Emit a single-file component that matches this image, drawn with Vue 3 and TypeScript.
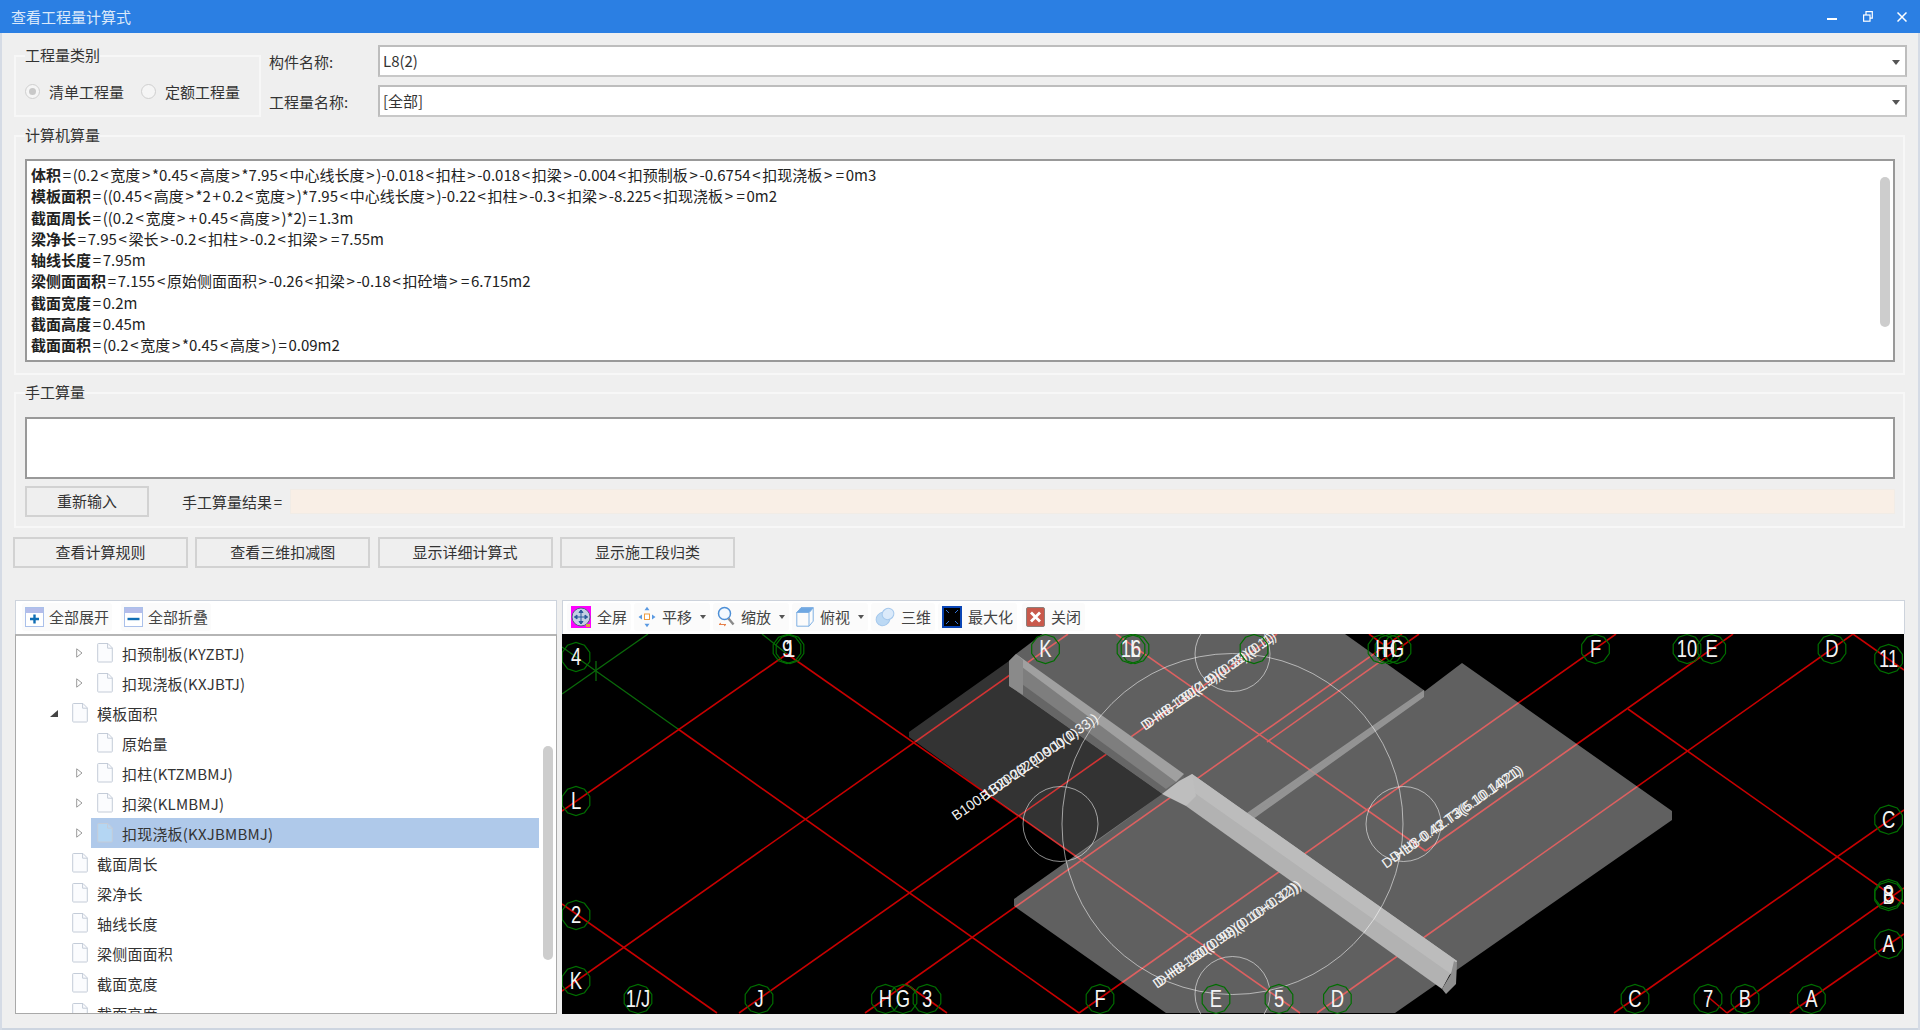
<template>
  <div class="window">
    <!-- 标题栏 -->
    <div class="titlebar">
      <span class="title">查看工程量计算式</span>
      <div class="win-btns">
        <svg class="win-min" width="10" height="10" viewBox="0 0 10 10"><rect x="0" y="6" width="10" height="2" fill="#fff" /></svg>
        <svg width="10" height="11" viewBox="0 0 10 11" fill="none" stroke="#fff" stroke-width="1.2"><rect x=".6" y="4" width="6.4" height="6.2" /><path d="M3 4V.7h6.3v6.5H7" /></svg>
        <svg width="10" height="10" viewBox="0 0 10 10" stroke="#fff" stroke-width="1.5"><path d="M.5.5l9 9M9.5.5l-9 9" /></svg>
      </div>
    </div>

    <div class="top-row">
      <fieldset class="group type-group">
        <legend>工程量类别</legend>
        <div class="radios">
          <label class="radio"><span class="dot checked"></span>清单工程量</label>
          <label class="radio"><span class="dot"></span>定额工程量</label>
        </div>
      </fieldset>
      <div class="combos">
        <span class="combo-label">构件名称:</span>
        <div class="combo">L8(2)<i class="caret"></i></div>
        <span class="combo-label">工程量名称:</span>
        <div class="combo">[全部]<i class="caret"></i></div>
      </div>
    </div>

    <!-- 计算机算量 -->
    <fieldset class="group calc-group">
      <legend>计算机算量</legend>
      <div class="formula-box">
        <div v-for="f in formulas" :key="f.name" class="formula">
          <b>{{ f.name }}</b><template v-for="(s, i) in splitExpr(f.expr)" :key="i"><span v-if="isSymbol(s)" class="sym">{{ s }}</span><template v-else>{{ s }}</template></template>
        </div>
        <div class="thumb formula-thumb"></div>
      </div>
    </fieldset>

    <!-- 手工算量 -->
    <fieldset class="group manual-group">
      <legend>手工算量</legend>
      <div class="manual-input"></div>
      <div class="manual-row">
        <button class="btn reset-btn">重新输入</button>
        <span class="result-label">手工算量结果<span class="sym">=</span></span>
        <div class="result-input"></div>
      </div>
    </fieldset>

    <div class="actions">
      <button v-for="a in actions" :key="a" class="btn action-btn">{{ a }}</button>
    </div>

    <div class="panels">
      <!-- 左侧树 -->
      <div class="tree-panel">
        <div class="toolbar">
          <span class="tool">
            <svg width="19" height="20" viewBox="0 0 19 20">
              <rect x=".5" y=".5" width="18" height="19" fill="#fff" stroke="#aac0ea" />
              <rect x="1" y="1" width="17" height="5" fill="#b4bdea" />
              <path d="M9.5 7.5v9M5 12h9" stroke="#0f6db4" stroke-width="2.4" />
            </svg>
            全部展开
          </span>
          <span class="tool">
            <svg width="19" height="20" viewBox="0 0 19 20">
              <rect x=".5" y=".5" width="18" height="19" fill="#fff" stroke="#aac0ea" />
              <rect x="1" y="1" width="17" height="5" fill="#b4bdea" />
              <path d="M3.5 12h12" stroke="#0f6db4" stroke-width="2.4" />
            </svg>
            全部折叠
          </span>
        </div>
        <div class="tree">
          <div v-for="n in nodes" :key="n.text" class="row" :class="'level' + n.level">
            <span class="expander">
              <svg v-if="n.kind === 'closed'" width="7" height="10" viewBox="0 0 7 10"><path d="M.7.8L6 5 .7 9.2z" fill="#fff" stroke="#9a9a9a" /></svg>
              <svg v-if="n.kind === 'open'" width="8" height="7" viewBox="0 0 8 7"><path d="M8 0v7H0z" fill="#444" /></svg>
            </span>
            <span class="node" :class="{ selected: n.selected }">
              <svg width="16" height="20" viewBox="0 0 16 20">
                <path d="M.7 1.2q0-.7.7-.7h9.6l4.3 4.4v13.4q0 .7-.7.7H1.4q-.7 0-.7-.7z" :fill="n.selected ? '#b4d6f3' : '#fbfcfe'" stroke="#c4ccd8" />
                <path d="M10.6.8v4.4h4.6" fill="none" stroke="#c4ccd8" />
              </svg>
              {{ n.text }}
            </span>
          </div>
          <div class="thumb tree-thumb"></div>
        </div>
      </div>

      <!-- 右侧三维视图 -->
      <div class="view-panel">
        <div class="toolbar view-toolbar">
          <span class="tool">
            <svg width="20" height="22" viewBox="0 0 20 22">
              <rect width="20" height="22" fill="#f0f" />
              <circle cx="10" cy="11" r="9" fill="#c3d0e4" stroke="#52647f" />
              <path d="M10 4v14M3.500 11h13M10 4l-2 2.500h4zM10 18l-2-2.500h4zM3.500 11l2.500-2v4zM16.500 11l-2.500-2v4z" fill="#2b5a9b" stroke="#2b5a9b" />
              <rect x="15" y="18" width="4" height="3" fill="#e2a23c" />
            </svg>
            全屏
          </span>
          <span class="tool">
            <svg width="18" height="22" viewBox="0 0 18 22" fill="#5b9ae2">
              <rect x="6.500" y="8" width="5" height="5.500" fill="#fff" stroke="#ef9b3c" />
              <path d="M9 .8l2.500 3.500h-5zM9 21.200l2.500-3.500h-5zM.5 11l3.500-2.500v5zM17.500 11L14 8.500v5z" />
            </svg>
            平移<i class="mini-caret"></i>
          </span>
          <span class="tool">
            <svg width="18" height="22" viewBox="0 0 18 22" fill="none">
              <circle cx="7.500" cy="7.500" r="6" stroke="#4d8fd6" stroke-width="1.500" fill="#f4f9fe" />
              <path d="M11.500 12.500l5 6" stroke="#8a8a8a" stroke-width="2.400" />
              <path d="M2 18.500h7M2 18.500l2-1.500M9 18.500l-2 1.500" stroke="#e7804a" />
            </svg>
            缩放<i class="mini-caret"></i>
          </span>
          <span class="tool">
            <svg width="18" height="20" viewBox="0 0 18 20" fill="none" stroke="#7fb0e3">
              <path d="M.8 5.500L5 .8h12.200v13.400L13 19.200H.8z" />
              <path d="M.8 5.500H13v13.700M13 5.500l4.200-4.700" />
              <path d="M.8 5.500L5 .8h12.200L13 5.500z" fill="#6ea7e2" />
            </svg>
            俯视<i class="mini-caret"></i>
          </span>
          <span class="tool">
            <svg width="20" height="20" viewBox="0 0 20 20">
              <ellipse cx="8" cy="12" rx="7" ry="6.500" fill="#bcd9f4" stroke="#a5c8ec" transform="rotate(-30 8 12)" />
              <ellipse cx="13" cy="7" rx="6" ry="5.500" fill="#dbeafa" stroke="#a5c8ec" transform="rotate(-30 13 7)" />
            </svg>
            三维
          </span>
          <span class="tool">
            <svg width="20" height="22" viewBox="0 0 20 22">
              <rect width="20" height="22" fill="#0a45b5" />
              <rect x="2" y="2" width="16" height="18" fill="#000" />
              <path d="M4 4l3 3M16 4l-3 3M4 18l3-3M16 18l-3-3" stroke="#3373d6" />
            </svg>
            最大化
          </span>
          <span class="tool tool-close">
            <svg width="19" height="20" viewBox="0 0 19 20">
              <rect x=".5" y=".5" width="18" height="19" rx="1.500" fill="#c9594b" stroke="#8d7f7b" />
              <path d="M5 5.500l9 9M14 5.500l-9 9" stroke="#fff" stroke-width="2.800" />
            </svg>
            关闭
          </span>
        </div>
        <svg class="canvas" width="1342" height="380" viewBox="563 635 1342 380">
          <rect x="563" y="635" width="1342" height="380" fill="#000" />
          <path v-for="(d, i) in greenLines" :key="'g' + i" :d="d" stroke="#0a6a0a" stroke-width="1.300" fill="none" />
          <path v-for="(d, i) in redLines" :key="'r' + i" :d="d" stroke="#c80000" stroke-width="1.600" fill="none" />

          <!-- 板 -->
          <polygon points="910,733 1010,662 1010,687 1163,795 1076,858 910,738" fill="#fff" opacity=".2" />
          <polygon points="1017,660 1017,655 1046,633 1346,635 1426,692 1249,818 1190,795" fill="#fff" opacity=".375" />
          <polygon points="1015,900 1163,795 1249,818 1426,692 1463,664 1673,812 1673,821 1396,1014 1167,1014 1015,907" fill="#fff" opacity=".375" />
          <polygon points="1425,691 1425,698 1250,823 1245,816" fill="#a0a0a0" opacity=".8" />

          <!-- 梁 -->
          <polygon points="1010,662 1017,655 1185,777 1187,807 1163,795 1010,687" fill="#666" />
          <polygon points="1023,665 1177,783 1167,790 1016,680" fill="#7e7e7e" />
          <polygon points="1017,655 1185,775 1177,783 1023,668" fill="#a0a0a0" />
          <polygon points="1010,662 1017,655 1024,661 1024,696 1010,687" fill="#8a8a8a" />
          <polygon points="1193,775 1458,962 1443,990 1187,807" fill="#b2b2b2" />
          <polygon points="1193,775 1458,962 1452,975 1190,790" fill="#bcbcbc" />
          <polygon points="1163,795 1180,782 1193,775 1197,797 1187,807" fill="#bebebe" />
          <polygon points="1455,962 1458,964 1457,985 1447,995 1443,990 1452,975" fill="#8f8f8f" />

          <circle cx="1233.500" cy="825" r="170.500" class="ring" />
          <circle cx="1061.500" cy="825" r="37.500" class="ring" />
          <circle cx="1404.500" cy="825" r="37.500" class="ring" />
          <circle cx="1233.500" cy="655" r="37.500" class="ring" />
          <circle cx="1233.500" cy="995" r="37.500" class="ring" />

          <text v-for="(t, i) in notes" :key="'n' + i" class="note" :transform="`translate(${t.x} ${t.y}) rotate(-35)`">{{ t.text }}</text>

          <polygon v-for="(t, i) in rings" :key="'o' + i" :points="decagon(t[0], t[1])" fill="none" stroke="#006e00" stroke-width="1.200" />
          <text v-for="(t, i) in tags" :key="'t' + i" class="tag" :transform="`translate(${t.x} ${t.y + 8}) scale(.8 1)`">{{ t.text }}</text>
        </svg>
      </div>
    </div>
  </div>
</template>

<script setup lang="ts">
interface TreeNode {
  text: string
  level: number
  kind: 'closed' | 'open' | 'leaf'
  selected?: boolean
}

const formulas = [
  { name: '体积', expr: '=(0.2<宽度>*0.45<高度>*7.95<中心线长度>)-0.018<扣柱>-0.018<扣梁>-0.004<扣预制板>-0.6754<扣现浇板>=0m3' },
  { name: '模板面积', expr: '=((0.45<高度>*2+0.2<宽度>)*7.95<中心线长度>)-0.22<扣柱>-0.3<扣梁>-8.225<扣现浇板>=0m2' },
  { name: '截面周长', expr: '=((0.2<宽度>+0.45<高度>)*2)=1.3m' },
  { name: '梁净长', expr: '=7.95<梁长>-0.2<扣柱>-0.2<扣梁>=7.55m' },
  { name: '轴线长度', expr: '=7.95m' },
  { name: '梁侧面面积', expr: '=7.155<原始侧面面积>-0.26<扣梁>-0.18<扣砼墙>=6.715m2' },
  { name: '截面宽度', expr: '=0.2m' },
  { name: '截面高度', expr: '=0.45m' },
  { name: '截面面积', expr: '=(0.2<宽度>*0.45<高度>)=0.09m2' }
]

// 符号两侧留的空比 CJK 字体默认的宽，单独包一层
const splitExpr = (expr: string) => expr.split(/([<>=+])/).filter(Boolean)
const isSymbol = (s: string) => /^[<>=+]$/.test(s)

const actions = ['查看计算规则', '查看三维扣减图', '显示详细计算式', '显示施工段归类']

const nodes: TreeNode[] = [
  { text: '扣预制板(KYZBTJ)', level: 2, kind: 'closed' },
  { text: '扣现浇板(KXJBTJ)', level: 2, kind: 'closed' },
  { text: '模板面积', level: 1, kind: 'open' },
  { text: '原始量', level: 2, kind: 'leaf' },
  { text: '扣柱(KTZMBMJ)', level: 2, kind: 'closed' },
  { text: '扣梁(KLMBMJ)', level: 2, kind: 'closed' },
  { text: '扣现浇板(KXJBMBMJ)', level: 2, kind: 'closed', selected: true },
  { text: '截面周长', level: 1, kind: 'leaf' },
  { text: '梁净长', level: 1, kind: 'leaf' },
  { text: '轴线长度', level: 1, kind: 'leaf' },
  { text: '梁侧面面积', level: 1, kind: 'leaf' },
  { text: '截面宽度', level: 1, kind: 'leaf' },
  { text: '截面高度', level: 1, kind: 'leaf' }
]

// 轴网线，坐标直接用整张图的像素
const redLines = [
  'M563 812L788 655',
  'M563 992L1069 635',
  'M740 1014L1278 635',
  'M866 1014L1403 635',
  'M1080 1014L1617 635',
  'M1426.500 852L1578 745L1734 635',
  'M1318 1014L1854 635',
  'M1615 1014L1905 811',
  'M1728 1014L1905 889',
  'M1791 1014L1905 935',
  'M788 655L1301 1014',
  'M679 730L1080 1014',
  'M563 905L718 1014',
  'M1117 635L1426.500 852',
  'M1268 743L1420 635',
  'M1370 635L1392 651',
  'M1854 635L1905 671',
  'M1629 710L1905 905',
  'M907 985L948 1014',
  'M1708 997L1728 1014'
]

const greenLines = [
  'M563 648L679 730',
  'M563 695L649 635',
  'M597 662V682',
  'M763 635L788 655'
]

const notes = [
  { x: 957, y: 822, text: 'B100-1B200(2.900.1)(0.33))' },
  { x: 985, y: 803, text: 'B100-282(1.900.1)' },
  { x: 1146, y: 732, text: 'D-H8-130(2.9)(0.33)(0.11)' },
  { x: 1149, y: 730, text: 'D-H8-180(1.9)(0.33)(0.1)' },
  { x: 1158, y: 990, text: 'D-H8-180(0.90)(0.10+0.32))' },
  { x: 1161, y: 988, text: 'D-H8-130(0.98)(0.10+0.12))' },
  { x: 1387, y: 870, text: 'D-H10-0.43.T3(6.10.14)21)' },
  { x: 1395, y: 864, text: 'D-H8-0.42.T3(5.10.1421)' }
]

const tags = [
  { x: 577, y: 658, text: '4' },
  { x: 788, y: 650, text: '9' },
  { x: 791, y: 650, text: '1' },
  { x: 1046.500, y: 650, text: 'K' },
  { x: 1132, y: 650, text: '16' },
  { x: 1136, y: 650, text: 'L' },
  { x: 577, y: 802, text: 'L' },
  { x: 577, y: 916, text: '2' },
  { x: 577, y: 982, text: 'K' },
  { x: 639, y: 1000, text: '1/J' },
  { x: 760, y: 1000, text: 'J' },
  { x: 886.500, y: 1000, text: 'H' },
  { x: 904, y: 1000, text: 'G' },
  { x: 928, y: 1000, text: '3' },
  { x: 1101, y: 1000, text: 'F' },
  { x: 1217, y: 1000, text: 'E' },
  { x: 1383, y: 650, text: 'H' },
  { x: 1390, y: 650, text: 'H' },
  { x: 1398, y: 650, text: 'G' },
  { x: 1596.500, y: 650, text: 'F' },
  { x: 1688, y: 650, text: '10' },
  { x: 1712.700, y: 650, text: 'E' },
  { x: 1833, y: 650, text: 'D' },
  { x: 1889.600, y: 660, text: '11' },
  { x: 1889.600, y: 820.700, text: 'C' },
  { x: 1889.600, y: 895, text: '8' },
  { x: 1889.600, y: 897, text: 'B' },
  { x: 1889.600, y: 945, text: 'A' },
  { x: 1280, y: 1000, text: '5' },
  { x: 1338.400, y: 1000, text: 'D' },
  { x: 1636, y: 1000, text: 'C' },
  { x: 1709, y: 1000, text: '7' },
  { x: 1746, y: 1000, text: 'B' },
  { x: 1812.400, y: 1000, text: 'A' }
]

// 每个轴号外面的绿色多边形
const rings: [number, number][] = [
  ...tags.map((t): [number, number] => [t.x, t.y]),
  [1255, 650]
]

const decagon = (x: number, y: number, r = 14.5) => {
  const pts: string[] = []
  for (let i = 0; i < 10; i++) {
    const a = (i * Math.PI) / 5 + Math.PI / 10
    pts.push(`${(x + r * Math.cos(a)).toFixed(1)},${(y + r * Math.sin(a)).toFixed(1)}`)
  }
  return pts.join(' ')
}
</script>

<style scoped>
.window {
  width: 1920px;
  height: 1030px;
  overflow: hidden;
  background: #efefef;
  box-shadow: inset 2px 0 0 #d5dbe5, inset -2px 0 0 #d5dbe5, inset 0 -2px 0 #cdd5e0;
  font-family: "Noto Sans CJK SC", "Noto Sans", sans-serif;
  font-size: 15px;
  color: #333;
}

.titlebar {
  height: 33px;
  background: #2b7fe3;
  display: flex;
  align-items: center;
  justify-content: space-between;
  padding: 0 13px 0 11px;
}

.title {
  color: #dbe9fa;
}

.win-btns {
  display: flex;
  align-items: center;
  gap: 24px;
}

.win-min {
  margin-right: 2px;
}

.top-row {
  display: flex;
  padding: 12px 0 0 14px;
}

.group {
  margin: 0;
  padding: 0 8px 0 9px;
  border: 2px solid #f7f7f7;
  box-sizing: border-box;
  min-width: 0;
}

.group legend {
  padding: 0 0 2px;
  line-height: 18px;
  height: 20px;
  box-sizing: border-box;
}

.type-group {
  width: 247px;
  height: 71px;
  margin-top: 1px;
}

.radios {
  display: flex;
  padding-top: 13px;
  gap: 17px;
}

.radio {
  display: flex;
  align-items: center;
  height: 24px;
  gap: 9px;
  white-space: nowrap;
}

.dot {
  width: 15px;
  height: 15px;
  border-radius: 50%;
  border: 1px solid #cfcfcf;
  background: #f5f5f5;
  box-sizing: border-box;
  display: block;
  position: relative;
}

.dot.checked::after {
  content: "";
  position: absolute;
  left: 3px;
  top: 3px;
  width: 7px;
  height: 7px;
  border-radius: 50%;
  background: #c8c8c8;
}

.combos {
  margin-left: 8px;
  display: grid;
  grid-template-columns: 109px 1529px;
  grid-auto-rows: 32px;
  row-gap: 8px;
  align-items: center;
}

.combo {
  height: 32px;
  box-sizing: border-box;
  border: 2px solid #bdbdbd;
  border-bottom-color: #c8c8c8;
  background: #fff;
  line-height: 28px;
  padding-left: 3px;
  position: relative;
}

.caret {
  position: absolute;
  right: 5px;
  top: 13px;
  border-top: 5px solid #555;
  border-left: 4px solid transparent;
  border-right: 4px solid transparent;
}

.calc-group {
  width: 1891px;
  height: 249px;
  margin-left: 14px;
  margin-top: 9px;
}

.formula-box {
  margin-top: 13px;
  height: 203px;
  box-sizing: border-box;
  border: 2px solid #999;
  background: #fff;
  padding: 3px 0 0 4px;
  position: relative;
  font-size: 15px;
  color: #222;
}

.formula {
  line-height: 21.3px;
  white-space: nowrap;
}

.formula b {
  font-weight: 700;
}

.sym {
  padding: 0 1.7px;
}

.thumb {
  position: absolute;
  background: #cdcdcd;
  border-radius: 5px;
  width: 10px;
}

.formula-thumb {
  right: 3px;
  top: 16px;
  height: 150px;
}

.manual-group {
  width: 1891px;
  height: 145px;
  margin-left: 14px;
  margin-top: 8px;
}

.manual-input {
  margin-top: 14px;
  height: 62px;
  box-sizing: border-box;
  border: 2px solid #999;
  background: #fff;
}

.manual-row {
  display: flex;
  align-items: center;
  margin-top: 7px;
}

.btn {
  height: 31px;
  box-sizing: border-box;
  background: #efefef;
  border: 2px solid #d2d2d2;
  font: inherit;
  color: #333;
  padding: 0 0 2px;
}

.reset-btn {
  width: 124px;
}

.result-label {
  margin-left: 33px;
  width: 108px;
  white-space: nowrap;
}

.result-input {
  flex: 1;
  height: 25px;
  background: #f9efe6;
  border: 1px solid #f1ece6;
  box-sizing: border-box;
}

.actions {
  display: flex;
  gap: 7.3px;
  margin: 9px 0 0 13px;
}

.action-btn {
  width: 175px;
}

.panels {
  display: flex;
  gap: 5px;
  margin: 32px 0 0 15px;
  height: 414px;
}

.tree-panel {
  width: 542px;
  display: flex;
  flex-direction: column;
}

.view-panel {
  width: 1343px;
  display: flex;
  flex-direction: column;
}

.toolbar {
  height: 34px;
  box-sizing: border-box;
  background: #fff;
  border: 1px solid #cdd3dc;
  border-bottom: none;
  display: flex;
  align-items: center;
  padding: 0 0 2px 6px;
  gap: 9px;
  flex-shrink: 0;
}

.tool {
  display: flex;
  align-items: center;
  gap: 5px;
  height: 28px;
  padding: 0 3px;
  background: #fbfbfb;
  border-radius: 3px;
  white-space: nowrap;
  color: #444;
}

.view-toolbar {
  gap: 3px;
  padding-left: 4px;
}

.view-toolbar .tool {
  padding: 0 4px;
  gap: 6px;
}

.view-toolbar .tool-close {
  margin-left: 2px;
}

.mini-caret {
  border-top: 4px solid #555;
  border-left: 3px solid transparent;
  border-right: 3px solid transparent;
  margin-left: 2px;
}

.tree {
  flex: 1;
  overflow: hidden;
  position: relative;
  background: #fff;
  border: 1px solid #a9a9a9;
  border-top: 2px solid #b5b5b5;
  padding-top: 2px;
}

.row {
  height: 30px;
  display: flex;
  align-items: center;
  margin-right: 17px;
  color: #333;
  letter-spacing: .2px;
}

.level1 {
  padding-left: 32px;
}

.level2 {
  padding-left: 57px;
}

.expander {
  width: 12px;
  margin-right: 6px;
  display: flex;
  justify-content: center;
}

.node {
  flex: 1;
  height: 30px;
  display: flex;
  align-items: center;
  gap: 9px;
  padding-left: 6px;
  white-space: nowrap;
}

.node.selected {
  background: #afc9ea;
}

.tree-thumb {
  right: 3px;
  top: 110px;
  height: 214px;
}

.canvas {
  display: block;
  flex-shrink: 0;
}

.ring {
  fill: none;
  stroke: #fff;
  stroke-opacity: .55;
  stroke-width: 1;
}

.note {
  fill: #f2f2f2;
  font-family: "Liberation Sans", sans-serif;
  font-size: 14px;
}

.tag {
  fill: #f4f4f4;
  font-family: "Liberation Sans", sans-serif;
  font-size: 23px;
  text-anchor: middle;
}
</style>
